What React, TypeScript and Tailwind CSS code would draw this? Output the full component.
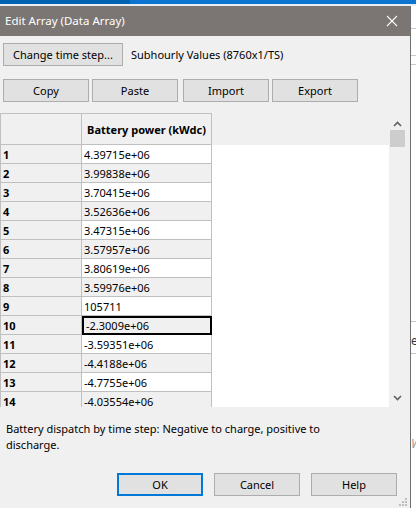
import React from "react";

const rows: string[] = [
  "4.39715e+06",
  "3.99838e+06",
  "3.70415e+06",
  "3.52636e+06",
  "3.47315e+06",
  "3.57957e+06",
  "3.80619e+06",
  "3.59976e+06",
  "105711",
  "-2.3009e+06",
  "-3.59351e+06",
  "-4.4188e+06",
  "-4.7755e+06",
  "-4.03554e+06",
];

const font = { fontFamily: '"Noto Sans", "Open Sans", sans-serif' };

function Btn({ label, className = "" }: { label: string; className?: string }) {
  return (
    <div
      className={`flex h-[23px] w-[86px] shrink-0 items-center justify-center border border-[#adadad] bg-[#e1e1e1] text-[11px] text-black ${className}`}
    >
      {label}
    </div>
  );
}

function Chevron({ up }: { up: boolean }) {
  return (
    <svg width="9" height="6" viewBox="0 0 9 6">
      <path
        d={up ? "M1 5 L4.5 1.5 L8 5" : "M1 1 L4.5 4.5 L8 1"}
        fill="none"
        stroke="#606060"
        strokeWidth="1.6"
      />
    </svg>
  );
}

export default function App() {
  return (
    <div className="flex h-[508px] w-[416px] flex-col overflow-hidden bg-white text-[11px] leading-none" style={font}>
      {/* app window strip behind the dialog */}
      <div className="flex h-[4px] shrink-0">
        <div className="w-[130px] bg-[#0063b1]" />
        <div className="flex-1 bg-[#0a74d0]" />
      </div>
      <div className="h-[2px] shrink-0 bg-[#e9eef3]" />
      <div className="flex min-h-0 flex-1">
        {/* dialog */}
        <div className="flex w-[410px] shrink-0 flex-col bg-[#f0f0f0]">
          <div className="flex h-[30px] shrink-0 items-center justify-between bg-[#7b7573] pl-[5px] pr-[12px]">
            <span className="text-[11.5px] text-white">Edit Array (Data Array)</span>
            <svg width="12" height="12" viewBox="0 0 12 12">
              <path d="M1 1 L11 11 M11 1 L1 11" stroke="#ffffff" strokeWidth="1.1" />
            </svg>
          </div>

          <div className="mt-[7px] flex items-center pl-[3px]">
            <div className="flex h-[23px] w-[120px] items-center justify-center border border-[#adadad] bg-[#e1e1e1] text-[11px]">
              Change time step...
            </div>
            <span className="ml-[8px] text-[11px]">Subhourly Values (8760x1/TS)</span>
          </div>

          <div className="mt-[13px] flex pl-[3px]">
            <Btn label="Copy" />
            <Btn label="Paste" className="ml-[3px]" />
            <Btn label="Import" className="ml-[5px]" />
            <Btn label="Export" className="ml-[3px]" />
          </div>

          {/* data grid */}
          <div className="mt-[11px] flex h-[294px] w-[405px] shrink-0 overflow-hidden">
            <div className="relative flex min-w-0 flex-1 flex-col overflow-hidden bg-white">
              <div className="flex h-[32px] shrink-0 bg-[#f0f0f0]">
                <div className="w-[82px] shrink-0 border-y border-r border-l border-[#c0c0c0]" />
                <div className="flex w-[130px] shrink-0 items-center justify-center whitespace-nowrap border-y border-r border-[#c0c0c0] text-[11px] font-bold">
                  Battery power (kWdc)
                </div>
              </div>
              {rows.map((v, i) => {
                const sel = i === 9;
                return (
                  <div key={i} className="flex h-[19px] shrink-0">
                    <div className="flex w-[82px] shrink-0 items-center border-b border-l border-r border-[#c0c0c0] bg-[#f0f0f0] pl-[2px] font-bold">
                      {i + 1}
                    </div>
                    <div
                      className={`flex w-[130px] shrink-0 items-center pl-[2px] ${
                        sel
                          ? "border-2 border-black bg-[#f0f0f0]"
                          : `border-b border-r border-[#c0c0c0] ${i % 2 === 1 ? "bg-[#f0f0f0]" : "bg-white"}`
                      }`}
                    >
                      {v}
                    </div>
                  </div>
                );
              })}
            </div>
            {/* vertical scrollbar */}
            <div className="flex w-[16px] shrink-0 flex-col items-center bg-[#f0f0f0]">
              <div className="flex h-[17px] w-full items-center justify-center pt-[4px]">
                <Chevron up />
              </div>
              <div className="h-[17px] w-[15px] bg-[#cdcdcd]" />
              <div className="flex-1" />
              <div className="flex h-[17px] w-full items-center justify-center pb-[2px]">
                <Chevron up={false} />
              </div>
            </div>
          </div>

          <p className="mt-[14px] w-[336px] pl-[6px] text-[11px] leading-[16px]">
            Battery dispatch by time step: Negative to charge, positive to discharge.
          </p>

          <div className="mt-[20px] flex gap-[11px] pl-[117px]">
            <div className="flex h-[23px] w-[86px] items-center justify-center border-2 border-[#0078d7] bg-[#e1e1e1] text-[11px]">
              OK
            </div>
            <Btn label="Cancel" />
            <Btn label="Help" />
          </div>

          <div className="relative flex-1">
            <svg className="absolute bottom-[2px] right-[3px]" width="8" height="8" viewBox="0 0 8 8">
              <g fill="#bdbdbd">
                <rect x="6" y="0" width="2" height="2" />
                <rect x="3" y="3" width="2" height="2" />
                <rect x="6" y="3" width="2" height="2" />
                <rect x="0" y="6" width="2" height="2" />
                <rect x="3" y="6" width="2" height="2" />
                <rect x="6" y="6" width="2" height="2" />
              </g>
            </svg>
          </div>
        </div>

        {/* sliver of the window behind */}
        <div className="flex flex-1 flex-col border-l border-[#6f6f6f] bg-white">
          <div className="mt-[22px] h-px bg-[#c8c8c8]" />
          <div className="mt-[26px] h-px bg-[#c8c8c8]" />
          <div className="mt-[8px] h-px bg-[#c8c8c8]" />
          <div className="mt-[256px] h-px bg-[#c8c8c8]" />
          <div className="mt-[13px] overflow-hidden whitespace-nowrap text-[12px] text-[#333]">ec</div>
          <div className="mt-[6px] h-px bg-[#c8c8c8]" />
          <div className="mt-[84px] overflow-hidden text-[12px] italic text-[#9a9a9a]">W</div>
        </div>
      </div>
    </div>
  );
}
